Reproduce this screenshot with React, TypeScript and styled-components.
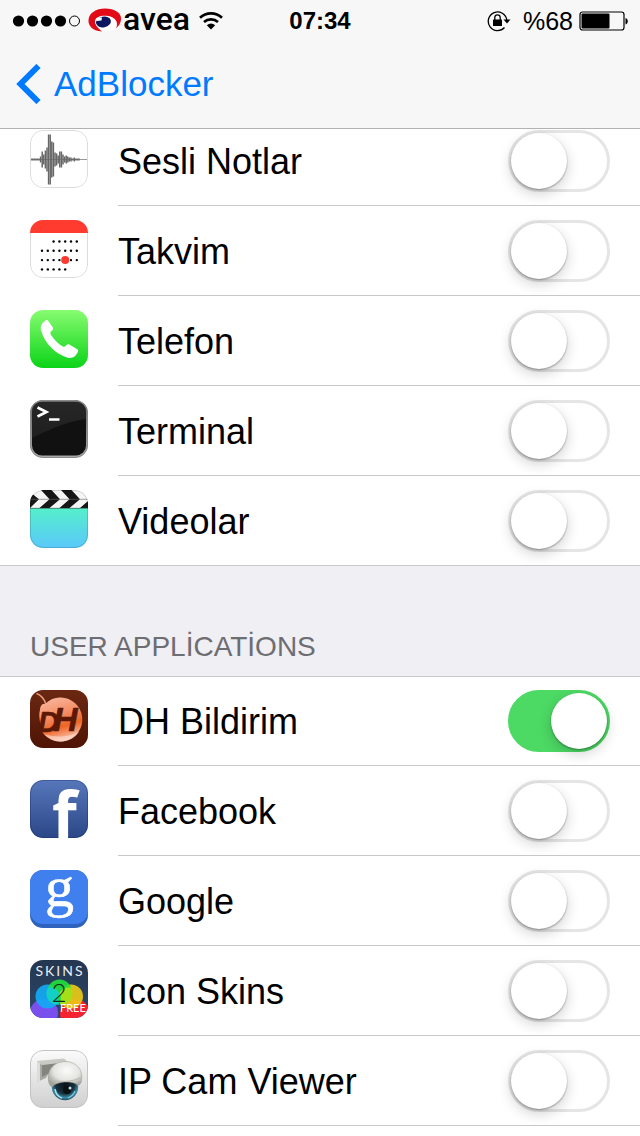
import React, { useState } from 'react';
import styled, { createGlobalStyle } from 'styled-components';

const GlobalStyle = createGlobalStyle`
  *, *::before, *::after { box-sizing: border-box; }
  body {
    margin: 0;
    background: #fff;
    color: #000;
    font-family: "Liberation Sans", Arial, sans-serif;
  }
`;

const Page = styled.div`
  min-height: 100vh;
  overflow: hidden;
`;

const TopBar = styled.header`
  position: sticky;
  top: 0;
  z-index: 2;
  background: #f7f7f7;
  border-bottom: 1px solid #b2b2b2;
`;

const StatusBar = styled.div`
  display: grid;
  grid-template-columns: 1fr auto 1fr;
  align-items: center;
  height: 40px;
  padding: 0 12px;
`;

const StatusGroup = styled.div<{ $end?: boolean }>`
  display: flex;
  align-items: center;
  justify-content: ${p => (p.$end ? 'flex-end' : 'flex-start')};
  height: 40px;
  svg { flex: none; display: block; }
`;

const Carrier = styled.span`
  display: flex;
  align-items: center;
  gap: 1px;
  margin: 0 8px 0 7px;
  font: 500 32px/36px Roboto, sans-serif;
`;

const CarrierName = styled.span`
  padding-bottom: 4px;
`;

const Clock = styled.time`
  font-size: 24px;
  font-weight: bold;
  line-height: 42px;
`;

const Percent = styled.span`
  margin: 0 6px 0 12px;
  font-size: 25px;
  line-height: 42px;
`;

const NavBar = styled.nav`
  display: flex;
  align-items: center;
  height: 88px;
  padding: 0 16px;
`;

const BackLink = styled.a`
  display: flex;
  align-items: center;
  gap: 12px;
  color: #007aff;
  font-size: 35px;
  line-height: 46px;
  text-decoration: none;
  svg { display: block; }
`;

/* The list is scrolled a little way under the bar. */
const Content = styled.main`
  margin-top: -13px;
`;

const List = styled.ul`
  margin: 0;
  padding: 0;
  list-style: none;
`;

const Row = styled.li`
  display: flex;
  gap: 30px;
  padding-left: 30px;
  > svg { flex: none; display: block; margin-top: 14px; overflow: visible; }
`;

const RowBody = styled.div`
  display: flex;
  flex: 1;
  align-items: flex-start;
  justify-content: space-between;
  height: 90px;
  padding: 14px 30px 0 0;
  border-bottom: 1px solid #c8c7cc;
`;

const AppName = styled.label`
  font-size: 36px;
  line-height: 64px;
`;

const Toggle = styled.input`
  appearance: none;
  flex: none;
  width: 102px;
  height: 62px;
  margin: 0;
  border: 3px solid #e5e5e5;
  border-radius: 31px;
  background: #fff;
  cursor: pointer;

  &::before {
    content: "";
    display: block;
    width: 56px;
    height: 56px;
    border-radius: 50%;
    background: #fff;
    box-shadow: 0 1px 2px rgba(0, 0, 0, 0.35), 0 5px 14px rgba(0, 0, 0, 0.18);
  }

  &:checked {
    border-color: #4cd964;
    background: #4cd964;
  }

  &:checked::before { margin-left: 40px; }
`;

const SectionTitle = styled.h2`
  position: relative;
  margin: 0;
  padding: 60px 30px 8px;
  background: #efeff4;
  box-shadow: 0 -1px #c8c7cc, 0 1px #c8c7cc;
  color: #6d6d72;
  font-size: 28px;
  font-weight: normal;
  line-height: 42px;
`;

/* A rounded 58px tile; lettering sits above the clipped artwork. */
const Icon = ({ children, lettering }: { children: React.ReactNode; lettering?: React.ReactNode }) => (
  <svg width="58" height="58" viewBox="0 0 58 58" aria-hidden="true">
    <defs>
      <clipPath id="tile"><rect width="58" height="58" rx="13" /></clipPath>
    </defs>
    <g clipPath="url(#tile)">{children}</g>
    {lettering}
  </svg>
);

const Outline = ({ color = '#dcdcdc' }: { color?: string }) => (
  <rect x="0.5" y="0.5" width="57" height="57" rx="12.5" fill="none" stroke={color} />
);

const Fade = ({ id, from, to }: { id: string; from: string; to: string }) => (
  <linearGradient id={id} x1="0" y1="0" x2="0" y2="1">
    <stop offset="0" stopColor={from} />
    <stop offset="1" stopColor={to} />
  </linearGradient>
);

const wave = [1, 1, 1, 1, 1, 1, 3, 8, 5, 9, 12, 25, 25, 18, 17, 7, 6, 4, 8, 8, 5, 3, 4, 3, 2, 2, 1, 2, 1, 1, 1];

const VoiceIcon = () => (
  <Icon>
    <rect width="58" height="58" fill="#fff" />
    <path d="M0 29.5H58" stroke="#999" />
    {wave.map((h, i) => (
      <path key={i} d={`M${1 + i * 1.6} ${29.5 - h}V${29.5 + h}`} stroke="#666" strokeWidth="1.5" />
    ))}
    <Outline />
  </Icon>
);

const dotRows = [[2, 6], [0, 6], [0, 6], [0, 4]];

const CalendarIcon = () => (
  <Icon>
    <rect width="58" height="58" fill="#fff" />
    <Outline />
    <rect width="58" height="13" fill="#ff3b30" />
    {dotRows.map(([a, b], r) =>
      Array.from({ length: b - a + 1 }, (_, i) => (
        <circle key={`${r}-${i}`} cx={12 + (a + i) * 5.8} cy={21.5 + r * 9.3} r="1.2" />
      )),
    )}
    <circle cx="35.2" cy="40.1" r="4" fill="#ff3b30" />
  </Icon>
);

const PhoneIcon = () => (
  <Icon>
    <defs><Fade id="phone" from="#87fc70" to="#0bd318" /></defs>
    <rect width="58" height="58" fill="url(#phone)" />
    <path
      d="M15.5 10.4C16.6 9.6 17.7 10 18.3 10.9L22.7 17.2C23.5 18.4 23.2 19.6 22.1 20.5C20.2 22 20 23.2 21 24.9C24 29.5 27.8 33.4 32.4 36.2C34.2 37.2 35.4 36.6 36.4 35.3C37.3 34.2 38.5 34.1 39.7 34.7L47 38.9C48.2 39.6 48.4 40.8 47.8 42C45.8 46.4 42.4 49 37.7 47.7C25.7 44.5 14.3 33 11.1 20.6C10 16.3 12 12.7 15.5 10.4Z"
      fill="#fff"
    />
  </Icon>
);

const TerminalIcon = () => (
  <Icon>
    <defs>
      <Fade id="frame" from="#666" to="#aaa" />
      <Fade id="screen" from="#2c2c2c" to="#222" />
    </defs>
    <rect width="58" height="58" fill="url(#frame)" />
    <rect x="2" y="2" width="54" height="53.5" rx="10" fill="#111" />
    <path d="M2 12Q2 2 12 2H46Q56 2 56 12V19C38 21 18 30 2 38Z" fill="url(#screen)" opacity="0.8" />
    <path d="M7.5 7.5L16.500 12L7.5 16.5" fill="none" stroke="#fff" strokeWidth="2.6" />
    <path d="M19 19.5H29.5" stroke="#fff" strokeWidth="2.6" />
    <Outline color="#8a8a8a" />
  </Icon>
);

const VideoIcon = () => (
  <Icon>
    <defs><Fade id="video" from="#55efcb" to="#5ac8fa" /></defs>
    <rect width="58" height="58" fill="#f5f5f5" />
    <path
      d="M0 2L9 9.200L0 18ZM11 0H21.500L30 9.200L19.500 18H9.500L19.500 9.200ZM31 0H41.500L50 9.200L39.500 18H29.500L39.500 9.200ZM58 11V18H50Z"
      fill="#161616"
    />
    <path d="M0 9.3H58" stroke="#666" strokeWidth="0.6" />
    <rect y="18" width="58" height="40" fill="url(#video)" />
    <path d="M0 18.3H58" stroke="#333" strokeOpacity="0.7" strokeWidth="0.8" />
    <Outline color="rgba(0,0,0,0.15)" />
  </Icon>
);

const DhIcon = () => (
  <Icon
    lettering={
      <g fontFamily="Liberation Sans" fontWeight="bold" fontStyle="italic" fill="#5b1806" stroke="#5b1806" strokeWidth="0.6">
        <text x="8" y="42" fontSize="29">D</text>
        <text x="23" y="41" fontSize="34">H</text>
      </g>
    }
  >
    <defs>
      <Fade id="dh" from="#6b2812" to="#4f1405" />
      <linearGradient id="ball" x1="0.2" y1="0" x2="0.5" y2="1">
        <stop offset="0" stopColor="#f8b8a0" />
        <stop offset="0.45" stopColor="#f58a60" />
        <stop offset="0.7" stopColor="#ee6424" />
        <stop offset="1" stopColor="#f9c4b0" />
      </linearGradient>
    </defs>
    <rect width="58" height="58" fill="url(#dh)" />
    <path d="M6.500 3.500C11 5 14 9 16 14" fill="none" stroke="#e79a7c" strokeWidth="1.6" />
    <path d="M10 20C10 17 12 13 15 14C20 9 26 7 31 7.500A22 22 0 1 1 10 38C11 32 8 26 10 20Z" fill="url(#ball)" />
    <path d="M14 44A22 22 0 0 0 49 42Q32 50 14 44Z" fill="#fde0d4" opacity="0.6" />
  </Icon>
);

const FacebookIcon = () => (
  <Icon
    lettering={
      <text x="22" y="58" fontFamily="Open Sans" fontWeight="bold" fontSize="64" fill="#fff">f</text>
    }
  >
    <defs><Fade id="fb" from="#5777bb" to="#2b4787" /></defs>
    <rect width="58" height="58" fill="url(#fb)" />
    <Outline color="rgba(20,40,100,0.35)" />
  </Icon>
);

const GoogleIcon = () => (
  <Icon
    lettering={
      <text x="15" y="36" fontFamily="Liberation Serif" fontSize="58" fill="#fff" stroke="#fff" strokeWidth="0.6">g</text>
    }
  >
    <rect width="58" height="58" fill="#2f62bd" />
    <rect y="-10" width="58" height="64" rx="13" fill="#4080ee" />
  </Icon>
);

const SkinsIcon = () => (
  <Icon
    lettering={
      <g fontFamily="Lato">
        <text x="30" y="16" textAnchor="middle" fontSize="14" letterSpacing="2" fill="#e8edf3">SKINS</text>
        <text x="29" y="42" textAnchor="middle" fontWeight="300" fontSize="26" fill="#082c18">2</text>
        <text x="30" y="52" fontSize="11" fill="#fff">FREE</text>
      </g>
    }
  >
    <defs><Fade id="skins" from="#24364f" to="#2c4a6c" /></defs>
    <rect width="58" height="58" fill="url(#skins)" />
    <circle cx="14" cy="53" r="14" fill="#7950ed" />
    <circle cx="45" cy="54" r="15" fill="#f5232f" />
    <circle cx="17.500" cy="36.500" r="12" fill="#12a9f4" opacity="0.92" />
    <circle cx="41" cy="36.500" r="12" fill="#e9c916" opacity="0.92" />
    <circle cx="29.500" cy="31.500" r="12" fill="#22e03c" opacity="0.9" />
    <path d="M19 41A12.500 12.500 0 0 0 29.500 44.500A12 12 0 0 1 29.500 33A12 12 0 0 0 18 27.500A12.500 12.500 0 0 0 19 41Z" fill="#14cfc4" />
    <path d="M40 41A12.500 12.500 0 0 1 29.500 44.500A12 12 0 0 0 29.500 33A12 12 0 0 1 41 27.500A12.500 12.500 0 0 1 40 41Z" fill="#a6df1a" />
  </Icon>
);

const CameraIcon = () => (
  <Icon>
    <defs>
      <Fade id="cam" from="#fbfbfb" to="#cfcfcf" />
      <radialGradient id="dome" cx="0.55" cy="0.35" r="0.65">
        <stop offset="0" stopColor="#fbfbf9" />
        <stop offset="0.6" stopColor="#e4e4e0" />
        <stop offset="1" stopColor="#a3a39d" />
      </radialGradient>
      <radialGradient id="lens" cx="0.5" cy="0.4" r="0.6">
        <stop offset="0" stopColor="#0a1116" />
        <stop offset="0.6" stopColor="#17323e" />
        <stop offset="0.85" stopColor="#3c8ba8" />
        <stop offset="1" stopColor="#1b4a5c" />
      </radialGradient>
    </defs>
    <rect width="58" height="58" fill="url(#cam)" />
    <path d="M7 11L20 12V21L16 28L7 32Z" fill="#a9a9a5" />
    <path d="M7 11L10 12V31L7 32Z" fill="#dcdcd9" />
    <path d="M12 15L36 11V20L22 22L12 27Z" fill="#858580" />
    <path d="M7 11L34 8.500L38 12L12 15Z" fill="#c9c9c5" />
    <circle cx="35" cy="37" r="13.200" fill="url(#lens)" />
    <path d="M18.500 31C16.500 19 25 11.500 35 11.500C46 11.500 53.500 19 51.500 31C51 33.500 49.500 35 48 35.500C44 30 26 31 22 37C20 36 19 34 18.500 31Z" fill="url(#dome)" stroke="#9c9c97" strokeWidth="0.500" />
    <path d="M18.500 29C28 33 43 32 52 27" fill="none" stroke="#b9b9b4" strokeWidth="0.900" />
    <circle cx="37" cy="40" r="4" fill="#0a0f13" />
    <circle cx="40" cy="38" r="1.500" fill="#c5dde4" />
    <path d="M25 39Q26 46 32 48" fill="none" stroke="#a4e4f6" strokeWidth="1.600" />
    <path d="M38 48Q43 46 45 41" fill="none" stroke="#7cc9e2" strokeWidth="1.200" />
    <Outline color="#c4c4c4" />
  </Icon>
);

const SignalDots = () => (
  <svg width="69" height="14" viewBox="0 0 69 14" role="img" aria-label="Signal">
    {[0, 1, 2, 3].map(i => <circle key={i} cx={6.5 + i * 14} cy="7" r="5.600" />)}
    <circle cx="62.500" cy="7" r="5" fill="none" stroke="#000" />
  </svg>
);

const CarrierMark = () => (
  <svg width="34" height="26" viewBox="0 0 34 26" aria-hidden="true">
    <path d="M14 23.500C4 23 0 17 0.500 12C1 5 8 0.500 17 0.500C27 0.500 33 5 33 10C33 15 31 18 28 20C31 14 27 9 20 8C13 7 8 9 7 13C7 17 10 20 14 23.500Z" fill="#e30a17" />
    <path d="M7 13C8 9 13 8 18 8C26 9 30 13 28 20C25 23 19 24 14 22C10 20 7 17 7 13Z" fill="#fff" />
    <ellipse cx="15.500" cy="14" rx="7.500" ry="5.300" transform="rotate(-12 15.500 14)" fill="#0a1560" />
    <path d="M8 10L14 9.500L13.500 12.500L9 13Z" fill="#fff" />
  </svg>
);

const WifiMark = () => (
  <svg width="26" height="20" viewBox="0 0 26 20" role="img" aria-label="Wi-Fi">
    <path d="M2 6.800A16 16 0 0 1 24 6.800M6 11A10.500 10.500 0 0 1 20 11" fill="none" stroke="#000" strokeWidth="2.600" />
    <path d="M8.800 14.200Q13 10.600 17.200 14.200L13 18.500Z" />
  </svg>
);

const RotationLock = () => (
  <svg width="24" height="22" viewBox="0 0 24 22" role="img" aria-label="Rotation lock">
    <path d="M17.500 17.500A9.300 9.300 0 1 1 19.800 10" fill="none" stroke="#000" strokeWidth="1.300" />
    <path d="M16.500 9.500H23.500L20 13.500Z" />
    <rect x="6" y="9.500" width="9" height="6.500" rx="0.500" />
    <path d="M7.800 10V7.500A2.700 2.700 0 0 1 13.200 7.500V10" fill="none" stroke="#000" strokeWidth="1.300" />
  </svg>
);

const Battery = () => (
  <svg width="49" height="20" viewBox="0 0 49 20" role="img" aria-label="Battery">
    <rect x="1" y="1" width="44" height="18" rx="2.500" fill="none" stroke="#000" strokeWidth="1.200" />
    <rect x="2.500" y="2.500" width="28" height="15" rx="1" />
    <path d="M46.500 7C49.500 7.500 49.500 13 46.500 13.500Z" />
  </svg>
);

interface AppEntry {
  id: string;
  name: string;
  icon: React.ComponentType;
  on?: boolean;
}

const systemApps: AppEntry[] = [
  { id: 'voice', name: 'Sesli Notlar', icon: VoiceIcon },
  { id: 'calendar', name: 'Takvim', icon: CalendarIcon },
  { id: 'phone-app', name: 'Telefon', icon: PhoneIcon },
  { id: 'terminal', name: 'Terminal', icon: TerminalIcon },
  { id: 'videos', name: 'Videolar', icon: VideoIcon },
];

const userApps: AppEntry[] = [
  { id: 'dh-app', name: 'DH Bildirim', icon: DhIcon, on: true },
  { id: 'facebook', name: 'Facebook', icon: FacebookIcon },
  { id: 'google', name: 'Google', icon: GoogleIcon },
  { id: 'skins-app', name: 'Icon Skins', icon: SkinsIcon },
  { id: 'ipcam', name: 'IP Cam Viewer', icon: CameraIcon },
];

const AppRow = ({ app }: { app: AppEntry }) => {
  const [on, setOn] = useState(!!app.on);
  const Picture = app.icon;
  return (
    <Row>
      <Picture />
      <RowBody>
        <AppName htmlFor={app.id}>{app.name}</AppName>
        <Toggle id={app.id} type="checkbox" role="switch" checked={on} onChange={e => setOn(e.target.checked)} />
      </RowBody>
    </Row>
  );
};

export default function App() {
  return (
    <Page>
      <GlobalStyle />
      <TopBar>
        <StatusBar>
          <StatusGroup>
            <SignalDots />
            <Carrier>
              <CarrierMark />
              <CarrierName>avea</CarrierName>
            </Carrier>
            <WifiMark />
          </StatusGroup>
          <Clock>07:34</Clock>
          <StatusGroup $end>
            <RotationLock />
            <Percent>%68</Percent>
            <Battery />
          </StatusGroup>
        </StatusBar>
        <NavBar>
          <BackLink href="#">
            <svg width="26" height="40" viewBox="0 0 26 40" aria-hidden="true">
              <path d="M22.500 2L4.500 20L22.500 38" fill="none" stroke="#007aff" strokeWidth="6" />
            </svg>
            AdBlocker
          </BackLink>
        </NavBar>
      </TopBar>
      <Content>
        <List>{systemApps.map(app => <AppRow key={app.id} app={app} />)}</List>
        <SectionTitle>USER APPLİCATİONS</SectionTitle>
        <List>{userApps.map(app => <AppRow key={app.id} app={app} />)}</List>
      </Content>
    </Page>
  );
}
